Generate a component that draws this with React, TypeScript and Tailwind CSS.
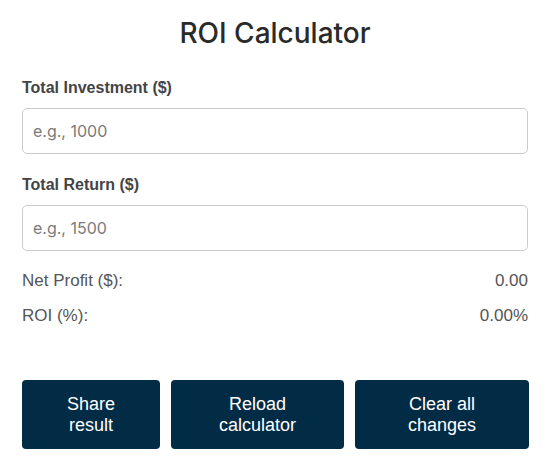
import { useState } from 'react';

const arial = { fontFamily: '"Liberation Sans", Arial, sans-serif' };

function Field({ label, placeholder, value, onChange }: { label: string; placeholder: string; value: string; onChange: (v: string) => void }) {
  return (
    <div className="flex flex-col">
      <label className="text-[16px] leading-[20px] font-bold text-[#444]" style={arial}>
        {label}
      </label>
      <input
        type="number"
        value={value}
        onChange={(e) => onChange(e.target.value)}
        placeholder={placeholder}
        className="mt-[10px] h-[46px] w-full rounded-[5px] border border-[#ccc] bg-white px-[10px] text-[16px] text-[#333] outline-none placeholder:text-[#7a7a7a] font-['Inter',sans-serif]"
      />
    </div>
  );
}

export default function App() {
  const [investment, setInvestment] = useState('');
  const [ret, setRet] = useState('');

  const inv = parseFloat(investment);
  const r = parseFloat(ret);
  const profit = !isNaN(inv) && !isNaN(r) ? r - inv : 0;
  const roi = !isNaN(inv) && inv !== 0 && !isNaN(r) ? (profit / inv) * 100 : 0;

  const clear = () => {
    setInvestment('');
    setRet('');
  };

  return (
    <div className="min-h-[469px] bg-white pl-[22px] pr-[28px]">
      <h1 className="pt-[15px] text-center text-[28px] leading-[36px] font-medium text-[#2a2a2a] font-['Inter',sans-serif]">
        ROI Calculator
      </h1>

      <div className="mt-[27px] flex flex-col gap-[21px]">
        <Field label="Total Investment ($)" placeholder="e.g., 1000" value={investment} onChange={setInvestment} />
        <Field label="Total Return ($)" placeholder="e.g., 1500" value={ret} onChange={setRet} />
      </div>

      {/* Results */}
      <div className="mt-[20px] flex flex-col gap-[15px] text-[17px] leading-[20px] text-[#555]" style={arial}>
        <div className="flex justify-between">
          <span>Net Profit ($):</span>
          <span>{profit.toFixed(2)}</span>
        </div>
        <div className="flex justify-between">
          <span>ROI (%):</span>
          <span>{roi.toFixed(2)}%</span>
        </div>
      </div>

      {/* Actions */}
      <div className="mt-[54px] flex gap-[11px] text-[18px] leading-[21px] text-white" style={arial}>
        <button type="button" className="h-[69px] w-[138px] shrink-0 rounded-[4px] bg-[#022b45] px-3">
          Share<br />result
        </button>
        <button type="button" onClick={() => window.location.reload()} className="h-[69px] w-[173px] shrink-0 rounded-[4px] bg-[#022b45] px-3">
          Reload<br />calculator
        </button>
        <button type="button" onClick={clear} className="h-[69px] w-[174px] shrink-0 rounded-[4px] bg-[#022b45] px-3">
          Clear all<br />changes
        </button>
      </div>
    </div>
  );
}
